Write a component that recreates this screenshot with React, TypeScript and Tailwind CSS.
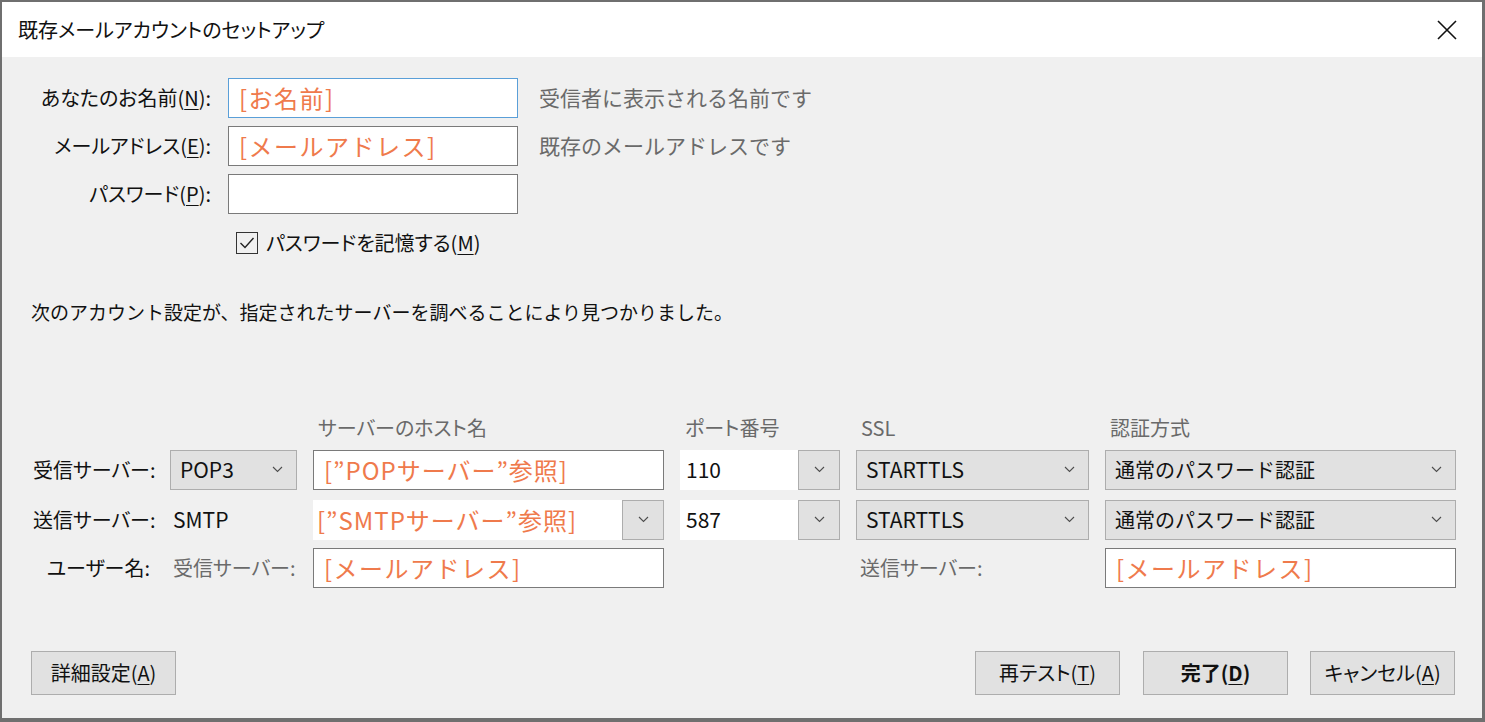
import React from "react";

const FONT = "font-['Noto_Sans_CJK_JP','Noto_Sans',sans-serif]";
const PALT = "[font-feature-settings:'palt']";

function Chevron() {
  return (
    <svg width="11" height="7" viewBox="0 0 11 7" className="shrink-0">
      <path d="M1 1 L5.5 5.5 L10 1" fill="none" stroke="#4d4d4d" strokeWidth="1.1" />
    </svg>
  );
}

function Mn({ ch }: { ch: string }) {
  return <span className="underline underline-offset-[3px] decoration-1">{ch}</span>;
}

function Select({ value, className = "" }: { value: string; className?: string }) {
  return (
    <div
      className={`flex h-10 items-center justify-between border border-[#adadad] bg-[#e1e1e1] pl-[9px] pr-[13px] text-[20px] text-[#111] ${className}`}
    >
      <span>{value}</span>
      <Chevron />
    </div>
  );
}

function Combo({ value, orange }: { value: string; orange?: boolean }) {
  return (
    <div className="flex h-10 items-stretch">
      <div
        className={`flex flex-1 items-center whitespace-nowrap bg-white pl-[4px] ${orange ? "text-[#ef7a4c] text-[24px] tracking-[1px]" : "pl-[6px] text-[21px] text-[#111]"}`}
      >
        {value}
      </div>
      <div className="flex w-[42px] items-center justify-center border border-[#adadad] bg-[#e1e1e1]">
        <Chevron />
      </div>
    </div>
  );
}

function TextBox({ value, focus, className = "" }: { value?: string; focus?: boolean; className?: string }) {
  return (
    <div
      className={`flex h-10 items-center whitespace-nowrap border bg-white pl-[10px] text-[24px] tracking-[1.5px] text-[#ef7a4c] ${focus ? "border-[#5a9fd8]" : "border-[#7a7a7a]"} ${className}`}
    >
      {value}
    </div>
  );
}

function Button({ children, bold, className = "" }: { children: React.ReactNode; bold?: boolean; className?: string }) {
  return (
    <div
      className={`flex h-[44px] w-[145px] items-center justify-center border border-[#adadad] bg-[#e1e1e1] text-[20px] text-[#111] ${PALT} ${bold ? "font-bold" : ""} ${className}`}
    >
      {children}
    </div>
  );
}

export default function App() {
  const formRows = [
    { label: "あなたのお名前", key: "N", value: "[お名前]", hint: "受信者に表示される名前です", focus: true },
    { label: "メールアドレス", key: "E", value: "[メールアドレス]", hint: "既存のメールアドレスです" },
    { label: "パスワード", key: "P", value: "", hint: "" },
  ];

  const head = `whitespace-nowrap pl-[5px] text-[20px] leading-[26px] text-[#6a6a6a] ${PALT}`;
  const lbl = `flex h-10 items-center whitespace-nowrap text-[20px] ${PALT}`;

  return (
    <div className={`flex h-[722px] w-[1485px] flex-col border-l-2 border-t-2 border-r-[3px] border-b-[4px] border-[#6f6f6f] ${FONT}`}>
      <div className="flex h-[55px] shrink-0 items-center justify-between bg-white pl-4 pr-[25px]">
        <span className={`text-[20px] text-[#111] ${PALT}`}>既存メールアカウントのセットアップ</span>
        <svg width="20" height="20" viewBox="0 0 20 20">
          <path d="M1 1 L19 19 M19 1 L1 19" stroke="#111" strokeWidth="1.6" />
        </svg>
      </div>

      <div className="flex flex-1 flex-col bg-[#f0f0f0] text-[#111]">
        <div className="mt-[21px] flex flex-col gap-2">
          {formRows.map((r) => (
            <div key={r.key} className="flex h-10 items-center">
              <div className={`w-[209px] whitespace-nowrap text-right text-[20px] ${PALT}`}>
                {r.label}(<Mn ch={r.key} />):
              </div>
              <TextBox value={r.value} focus={r.focus} className="ml-[17px] w-[290px]" />
              <span className="ml-[21px] whitespace-nowrap text-[21px] text-[#6a6a6a]">{r.hint}</span>
            </div>
          ))}
        </div>

        <div className="ml-[234px] mt-[14px] flex h-[30px] items-center">
          <div className="flex h-[22px] w-[22px] items-center justify-center border border-[#333]">
            <svg width="16" height="14" viewBox="0 0 16 14">
              <path d="M1.5 7 L6 11.5 L14.5 2" fill="none" stroke="#222" strokeWidth="1.4" />
            </svg>
          </div>
          <span className={`ml-[8px] text-[20px] ${PALT}`}>
            パスワードを記憶する(<Mn ch="M" />)
          </span>
        </div>

        <div className="ml-[29px] mt-[40px] text-[19px]">
          次のアカウント設定が、指定されたサーバーを調べることにより見つかりました。
        </div>

        <div className="ml-[29px] mt-[88px] grid grid-cols-[123px_127px_351px_160px_233px_351px] gap-x-4">
          <div />
          <div />
          <div className={head}>サーバーのホスト名</div>
          <div className={head}>ポート番号</div>
          <div className={head}>SSL</div>
          <div className={head}>認証方式</div>

          <div className={`mt-[9px] pl-[2px] ${lbl}`}>受信サーバー:</div>
          <Select value="POP3" className="mt-[9px] text-[21px]" />
          <TextBox value={"[\u201dPOPサーバー\u201d参照]"} className="mt-[9px] pl-[3px] tracking-[1px]" />
          <div className="mt-[9px]">
            <Combo value="110" />
          </div>
          <Select value="STARTTLS" className="mt-[9px] text-[21px]" />
          <Select value="通常のパスワード認証" className="mt-[9px]" />

          <div className={`mt-[10px] pl-[2px] ${lbl}`}>送信サーバー:</div>
          <div className="mt-[10px] flex h-10 items-center pl-[3px] text-[21px]">SMTP</div>
          <div className="mt-[10px]">
            <Combo value={"[\u201dSMTPサーバー\u201d参照]"} orange />
          </div>
          <div className="mt-[10px]">
            <Combo value="587" />
          </div>
          <Select value="STARTTLS" className="mt-[10px] text-[21px]" />
          <Select value="通常のパスワード認証" className="mt-[10px]" />

          <div className={`mt-2 justify-end pr-1 ${lbl}`}>ユーザー名:</div>
          <div className={`mt-2 pl-[3px] text-[#6a6a6a] ${lbl}`}>受信サーバー:</div>
          <TextBox value="[メールアドレス]" className="mt-2 pl-[3px]" />
          <div />
          <div className={`mt-2 pl-[4px] text-[#6a6a6a] ${lbl}`}>送信サーバー:</div>
          <TextBox value="[メールアドレス]" className="mt-2 pl-[5px]" />
        </div>

        <div className="mt-[63px] flex items-center pl-[29px] pr-[27px]">
          <Button>
            詳細設定(<Mn ch="A" />)
          </Button>
          <div className="flex-1" />
          <Button>
            再テスト(<Mn ch="T" />)
          </Button>
          <Button bold className="ml-[23px]">
            完了(<Mn ch="D" />)
          </Button>
          <Button className="ml-[22px]">
            キャンセル(<Mn ch="A" />)
          </Button>
        </div>
      </div>
    </div>
  );
}
